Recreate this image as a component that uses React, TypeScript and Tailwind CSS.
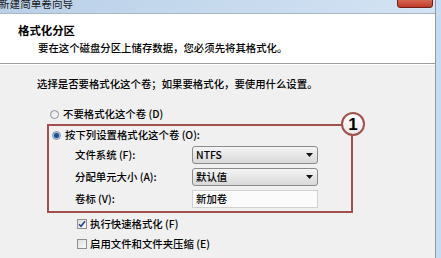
const cjk = { fontFamily: '"Noto Sans CJK SC", "Noto Sans", sans-serif' };

function Radio({ checked }: { checked?: boolean }) {
  return (
    <span className="flex h-[9px] w-[9px] items-center justify-center rounded-full border border-[#8a8f96] bg-gradient-to-br from-[#e4e4e4] to-[#fcfcfc]">
      {checked && <span className="h-[5px] w-[5px] rounded-full bg-[#1c4f8c] ring-1 ring-[#8cb4dc]" />}
    </span>
  );
}

function Check({ checked }: { checked?: boolean }) {
  return (
    <span className="flex h-[10px] w-[10px] items-center justify-center border border-[#8f8f8f] bg-gradient-to-br from-[#dedede] to-[#fafafa]">
      {checked && (
        <svg width="8" height="8" viewBox="0 0 8 8">
          <path d="M1 4.2 L3 6.3 L7 1.2" fill="none" stroke="#23418c" strokeWidth="1.5" />
        </svg>
      )}
    </span>
  );
}

function Select({ value }: { value: string }) {
  return (
    <div className="flex h-[18px] w-[126px] items-center justify-between rounded-[3px] border border-[#8b8b8b] bg-gradient-to-b from-[#f4f4f4] to-[#d9d9d9] pl-[3px] pr-[4px] text-[10.4px] leading-none text-black">
      <span>{value}</span>
      <svg width="7" height="4" viewBox="0 0 7 4">
        <path d="M0 0 H7 L3.5 4 Z" fill="#111" />
      </svg>
    </div>
  );
}

export default function App() {
  return (
    <div className="flex h-[258px] w-[441px] overflow-hidden bg-[#c8dcf0]" style={cjk}>
      <div className="flex w-[436px] flex-col border-r border-[#8d9aa8]">
        {/* title bar */}
        <div className="relative h-[13px] bg-gradient-to-r from-[#b9d0e8] to-[#d3e3f3]">
          <span className="absolute left-[-1px] top-[-3px] text-[10.6px] leading-[14px] text-[#1a1a1a]">新建简单卷向导</span>
          <span className="absolute left-[397px] top-[-4px] h-[12px] w-[36px] rounded-b-[3px] border border-[#6d2118] bg-gradient-to-b from-[#e07a62] to-[#c0392b]" />
        </div>

        {/* header */}
        <div className="h-[51px] border-t border-[#a9b8c6] border-b border-b-[#a0a0a0] bg-white">
          <div className="ml-[18px] mt-[9px] text-[11.4px] font-bold leading-[14px] text-black">格式化分区</div>
          <div className="ml-[38px] mt-[4px] text-[10.4px] font-medium leading-[14px] text-black">要在这个磁盘分区上储存数据，您必须先将其格式化。</div>
        </div>

        {/* body */}
        <div className="flex-1 border-t border-white bg-[#f0f0f0] text-[10.4px] font-medium leading-[14px] text-black">
          <div className="ml-[37px] mt-[12px]">选择是否要格式化这个卷；如果要格式化，要使用什么设置。</div>

          <div className="ml-[50px] mt-[16px] flex items-center gap-[4px]">
            <Radio />
            <span>不要格式化这个卷 (D)</span>
          </div>

          <div className="relative ml-[47px] mt-[3px] h-[89px] w-[306px] border-2 border-[#a2504c]">
            <div className="ml-[3px] mt-[2px] flex items-center gap-[4px]">
              <Radio checked />
              <span>按下列设置格式化这个卷 (O):</span>
            </div>
            <div className="ml-[26px] mt-[4px] flex flex-col gap-[4px]">
              <div className="flex items-center">
                <span className="w-[117px]">文件系统 (F):</span>
                <Select value="NTFS" />
              </div>
              <div className="flex items-center">
                <span className="w-[117px]">分配单元大小 (A):</span>
                <Select value="默认值" />
              </div>
              <div className="flex items-center">
                <span className="w-[117px]">卷标 (V):</span>
                <div className="flex h-[18px] w-[126px] items-center border border-[#d2d2d2] bg-[#fbfbfb] pl-[3px] leading-none">新加卷</div>
              </div>
            </div>
            {/* callout marker */}
            <div className="absolute right-[-14px] top-[-14px] flex h-[24px] w-[24px] items-center justify-center rounded-full border-2 border-[#a2504c] bg-gradient-to-b from-white to-[#e8e8e8] text-[17px] font-bold leading-none text-black" style={{ fontFamily: '"Liberation Sans", sans-serif' }}>
              1
            </div>
          </div>

          <div className="ml-[77px] mt-[4px] flex items-center gap-[3px]">
            <Check checked />
            <span>执行快速格式化 (F)</span>
          </div>
          <div className="ml-[77px] mt-[6px] flex items-center gap-[3px]">
            <Check />
            <span>启用文件和文件夹压缩 (E)</span>
          </div>
        </div>
      </div>
    </div>
  );
}
